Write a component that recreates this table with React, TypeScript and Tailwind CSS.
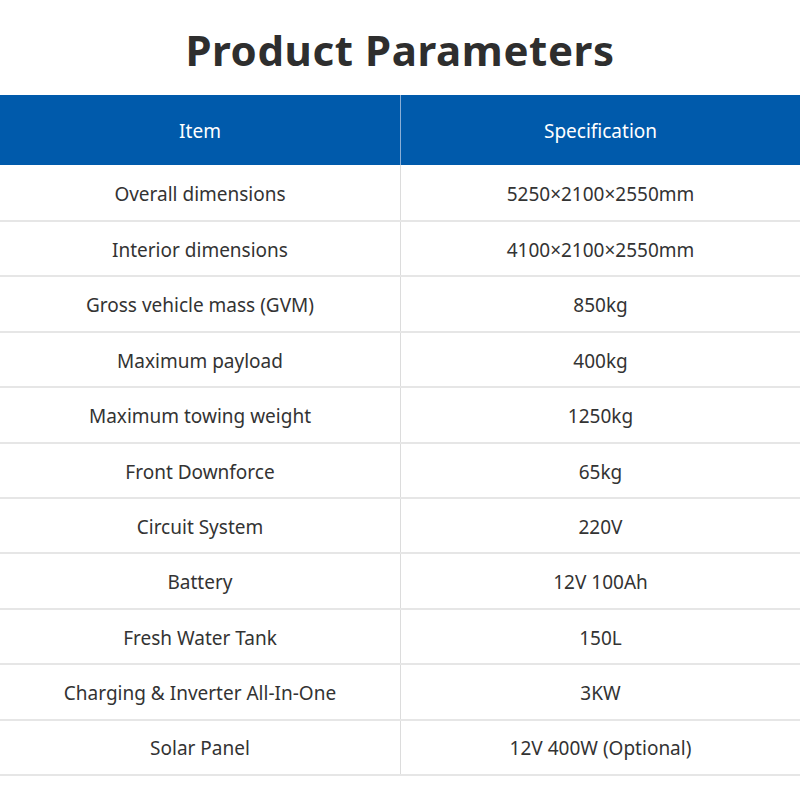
import React from 'react';

const rows: [string, string][] = [
  ['Overall dimensions', '5250×2100×2550mm'],
  ['Interior dimensions', '4100×2100×2550mm'],
  ['Gross vehicle mass (GVM)', '850kg'],
  ['Maximum payload', '400kg'],
  ['Maximum towing weight', '1250kg'],
  ['Front Downforce', '65kg'],
  ['Circuit System', '220V'],
  ['Battery', '12V 100Ah'],
  ['Fresh Water Tank', '150L'],
  ['Charging & Inverter All-In-One', '3KW'],
  ['Solar Panel', '12V 400W (Optional)'],
];

export default function App() {
  return (
    <div className="w-[800px] h-[800px] bg-white font-['Noto_Sans',sans-serif] text-[#333]">
      <h1 className="h-[95px] flex items-center justify-center pt-[4px] text-[42px] font-bold text-[#2e2e2e] tracking-[0.6px]">
        Product Parameters
      </h1>

      <div className="grid grid-cols-[401px_1fr] h-[70px] bg-[#005aab] text-white text-[19px]">
        <div className="flex items-center justify-center pt-[2px] border-r border-[#8aaed6]">Item</div>
        <div className="flex items-center justify-center pt-[2px]">Specification</div>
      </div>

      {rows.map(([item, spec], i) => (
        <div
          key={item}
          className={
            i === 0
              ? 'grid grid-cols-[401px_1fr] h-[57px] border-b-2 border-[#e6e6e6] text-[19px]'
              : 'grid grid-cols-[401px_1fr] h-[55.4px] border-b-2 border-[#e6e6e6] text-[19px]'
          }
        >
          <div className="flex items-center justify-center pt-[3px] border-r border-[#dcdcdc]">{item}</div>
          <div className="flex items-center justify-center pt-[3px]">{spec}</div>
        </div>
      ))}
    </div>
  );
}
